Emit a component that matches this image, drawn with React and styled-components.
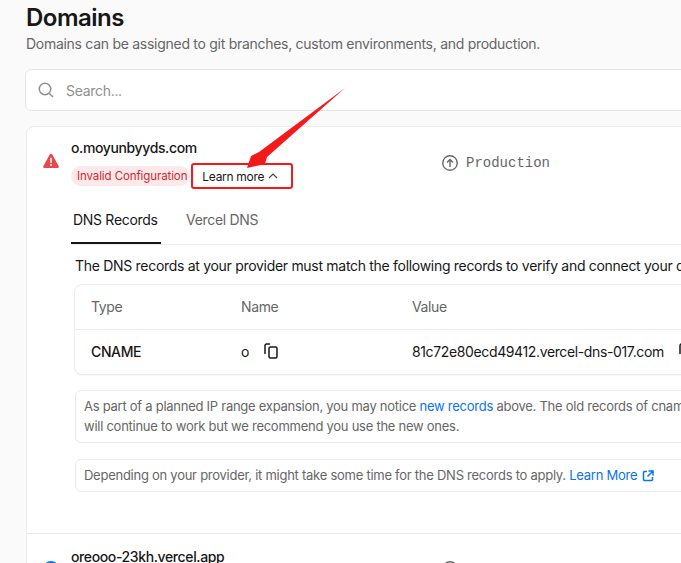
import React from "react";
import styled, { createGlobalStyle } from "styled-components";

const GlobalStyle = createGlobalStyle`
  html, body {
    margin: 0;
    height: 100%;
    overflow: hidden;
    background: #fafafa;
  }
  body {
    font-family: Inter, "Liberation Sans", sans-serif;
    color: #171717;
  }
  * { box-sizing: border-box; }
`;

const Page = styled.div`
  position: relative;
  width: 681px;
  height: 563px;
  overflow: hidden;
  padding: 4px 0 0 26px;
`;

const Content = styled.div`
  width: 1000px;
`;

const Title = styled.h1`
  margin: 0;
  font-size: 24px;
  line-height: 28px;
  font-weight: 600;
  letter-spacing: -0.5px;
  color: #171717;
`;

const Subtitle = styled.p`
  margin: 2px 0 0;
  font-size: 14px;
  line-height: 20px;
  letter-spacing: -0.28px;
  color: #666;
`;

const SearchBar = styled.div`
  display: flex;
  align-items: center;
  gap: 12px;
  height: 42px;
  margin: 15px 0 0 -1px;
  padding-left: 12px;
  background: #fff;
  border: 1px solid #e5e5e5;
  border-radius: 6px;
  font-size: 14px;
  letter-spacing: -0.3px;
  color: #8f8f8f;
`;

const Card = styled.section`
  margin-top: 15px;
  background: #fff;
  border: 1px solid #ebebeb;
  border-radius: 8px;
`;

const DomainRow = styled.div`
  display: grid;
  grid-template-columns: 44px 371px 1fr;
  padding: 11px 0 0;
`;

const StatusCell = styled.div`
  display: flex;
  justify-content: flex-start;
  padding: ${(p) => p.$top}px 0 0 16px;
`;

const DomainName = styled.div`
  font-size: 14px;
  line-height: 20px;
  font-weight: 450;
  letter-spacing: -0.38px;
  color: #171717;
`;

const BadgeRow = styled.div`
  display: flex;
  align-items: center;
  margin-top: 8px;
`;

const Badge = styled.span`
  display: inline-flex;
  align-items: center;
  height: 20px;
  padding: 0 3px 0 6px;
  border-radius: 10px;
  background: #ffe8ea;
  color: #cb2a2f;
  font-size: 11.5px;
  letter-spacing: -0.1px;
  white-space: nowrap;
`;

const LearnMore = styled.span`
  display: inline-flex;
  align-items: center;
  gap: 3px;
  margin-left: 12px;
  font-size: 12px;
  letter-spacing: -0.3px;
  color: #171717;
`;

const Environment = styled.div`
  display: flex;
  align-items: center;
  gap: 8px;
  height: 20px;
  margin-top: ${(p) => p.$top}px;
  font-family: "Liberation Mono", monospace;
  font-size: 14px;
  color: #666;
`;

const Details = styled.div`
  padding: 16px 0 41px 46px;
`;

const Tabs = styled.div`
  display: flex;
  gap: 23px;
  border-bottom: 1px solid #ebebeb;
  margin-left: -2px;
`;

const Tab = styled.div`
  height: 42px;
  padding: 0 2px;
  font-size: 14px;
  line-height: 36px;
  letter-spacing: -0.3px;
  white-space: nowrap;
  color: ${(p) => (p.$active ? "#171717" : "#666")};
  border-bottom: ${(p) => (p.$active ? "2px solid #171717" : "none")};
  width: ${(p) => (p.$active ? "90px" : "auto")};
`;

const Intro = styled.p`
  margin: 11px 0 0 2px;
  font-size: 14px;
  line-height: 20px;
  letter-spacing: -0.3px;
  white-space: nowrap;
  color: #171717;
`;

const RecordTable = styled.div`
  margin: 8px 0 0 1px;
  border: 1px solid #ebebeb;
  border-radius: 8px;
  box-shadow: 0 1px 1px rgba(0, 0, 0, 0.03);
`;

const TableRow = styled.div`
  display: grid;
  grid-template-columns: 150px 171px 1fr;
  align-items: center;
  height: ${(p) => (p.$head ? "45px" : "44px")};
  padding: 0 0 2px 16px;
  font-size: 14px;
  letter-spacing: -0.37px;
  color: ${(p) => (p.$head ? "#666" : "#171717")};
  border-bottom: ${(p) => (p.$head ? "1px solid #ebebeb" : "none")};
`;

const TypeCell = styled.span`
  font-weight: 500;
`;

const CopyCell = styled.span`
  display: inline-flex;
  align-items: center;
  gap: 14px;
  white-space: nowrap;
`;

const Note = styled.div`
  margin: ${(p) => p.$top}px 0 0 2px;
  padding: ${(p) => p.$pad};
  border: 1px solid #ebebeb;
  border-radius: 6px;
  font-size: 13px;
  line-height: 20px;
  letter-spacing: -0.26px;
  color: #666;
  white-space: nowrap;
`;

const Link = styled.a`
  color: #0a72ef;
`;

const ExternalIcon = styled.svg`
  vertical-align: -2px;
  margin-left: 5px;
`;

const NextRow = styled.div`
  display: grid;
  grid-template-columns: 44px 371px 1fr;
  padding-top: 13px;
  border-top: 1px solid #ebebeb;
`;

const Highlight = styled.div`
  position: absolute;
  left: 191px;
  top: 163px;
  width: 102px;
  height: 26px;
  border: 2px solid #f51a1a;
  border-radius: 3px;
  pointer-events: none;
`;

const Arrow = styled.svg`
  position: absolute;
  left: 240px;
  top: 85px;
  pointer-events: none;
`;

const CopyIcon = () => (
  <svg width="16" height="16" viewBox="0 0 16 16" fill="none" stroke="#171717" strokeWidth="1.5">
    <path d="M6.5 1H3.5C2.7 1 2 1.7 2 2.5V10.5" strokeLinecap="round" />
    <rect x="6" y="4" width="8" height="11" rx="1.5" />
  </svg>
);

const App = () => {
  return (
    <>
      <GlobalStyle />
      <Page>
        <Content>
          <Title>Domains</Title>
          <Subtitle>Domains can be assigned to git branches, custom environments, and production.</Subtitle>
          <SearchBar>
            <svg width="16" height="16" viewBox="0 0 16 16" fill="none" stroke="#8f8f8f" strokeWidth="1.5">
              <circle cx="7" cy="7" r="5.75" />
              <path d="M11.2 11.2L15 15" />
            </svg>
            Search...
          </SearchBar>
          <Card>
            <DomainRow>
              <StatusCell $top={15}>
                <svg width="16" height="16" viewBox="0 0 16 16">
                  <path d="M8 0.8c.5 0 1 .3 1.3.8l6.3 11.4c.5 1-.1 2-1.3 2H1.7c-1.2 0-1.8-1-1.3-2L6.700 1.600C7 1.100 7.500.8 8 .8z" fill="#e5484d" />
                  <rect x="7.200" y="4.800" width="1.600" height="5" fill="#fff" />
                  <circle cx="8" cy="12" r="1" fill="#fff" />
                </svg>
              </StatusCell>
              <div>
                <DomainName>o.moyunbyyds.com</DomainName>
                <BadgeRow>
                  <Badge>Invalid Configuration</Badge>
                  <LearnMore>
                    Learn more
                    <svg width="12" height="12" viewBox="0 0 12 12" fill="none" stroke="#444" strokeWidth="1.1">
                      <path d="M2 8l4-4 4 4" />
                    </svg>
                  </LearnMore>
                </BadgeRow>
              </div>
              <Environment $top={15}>
                <svg width="16" height="16" viewBox="0 0 16 16" fill="none" stroke="#666" strokeWidth="1.4">
                  <circle cx="8" cy="8" r="7.250" />
                  <path d="M8 12V4.800M5 7.500l3-3 3 3" />
                </svg>
                Production
              </Environment>
            </DomainRow>
            <Details>
              <Tabs>
                <Tab $active>DNS Records</Tab>
                <Tab>Vercel DNS</Tab>
              </Tabs>
              <Intro>The DNS records at your provider must match the following records to verify and connect your domain to Vercel.</Intro>
              <RecordTable>
                <TableRow $head>
                  <span>Type</span>
                  <span>Name</span>
                  <span>Value</span>
                </TableRow>
                <TableRow>
                  <TypeCell>CNAME</TypeCell>
                  <CopyCell>
                    o
                    <CopyIcon />
                  </CopyCell>
                  <CopyCell>
                    81c72e80ecd49412.vercel-dns-017.com
                    <CopyIcon />
                  </CopyCell>
                </TableRow>
              </RecordTable>
              <Note $top={15} $pad="5px 8px 6px">
                As part of a planned IP range expansion, you may notice <Link>new records</Link> above. The old records of cname.vercel-dns.com
                <br />
                will continue to work but we recommend you use the new ones.
              </Note>
              <Note $top={16} $pad="5px 8px 6px">
                Depending on your provider, it might take some time for the DNS records to apply. <Link>Learn More</Link>
                <ExternalIcon width="12" height="12" viewBox="0 0 12 12" fill="none" stroke="#0a72ef" strokeWidth="1.5">
                  <path d="M5 1.500H2.500a1 1 0 0 0-1 1v7a1 1 0 0 0 1 1h7a1 1 0 0 0 1-1V7M6.500 1H11v4.500M11 1L5.500 6.500" />
                </ExternalIcon>
              </Note>
            </Details>
            <NextRow>
              <StatusCell $top={14}>
                <svg width="16" height="16" viewBox="0 0 16 16">
                  <circle cx="8" cy="8" r="8" fill="#0a72ef" />
                </svg>
              </StatusCell>
              <DomainName>oreooo-23kh.vercel.app</DomainName>
              <Environment $top={12}>
                <svg width="16" height="16" viewBox="0 0 16 16" fill="none" stroke="#666" strokeWidth="1.4">
                  <circle cx="8" cy="8" r="7.250" />
                </svg>
              </Environment>
            </NextRow>
          </Card>
        </Content>
        <Highlight />
        <Arrow width="110" height="90" viewBox="0 0 110 90">
          <path d="M105 3L27 72L25 79L7 83L11 71L19 67Z" fill="#f51a1a" />
        </Arrow>
      </Page>
    </>
  );
};

export default App;
